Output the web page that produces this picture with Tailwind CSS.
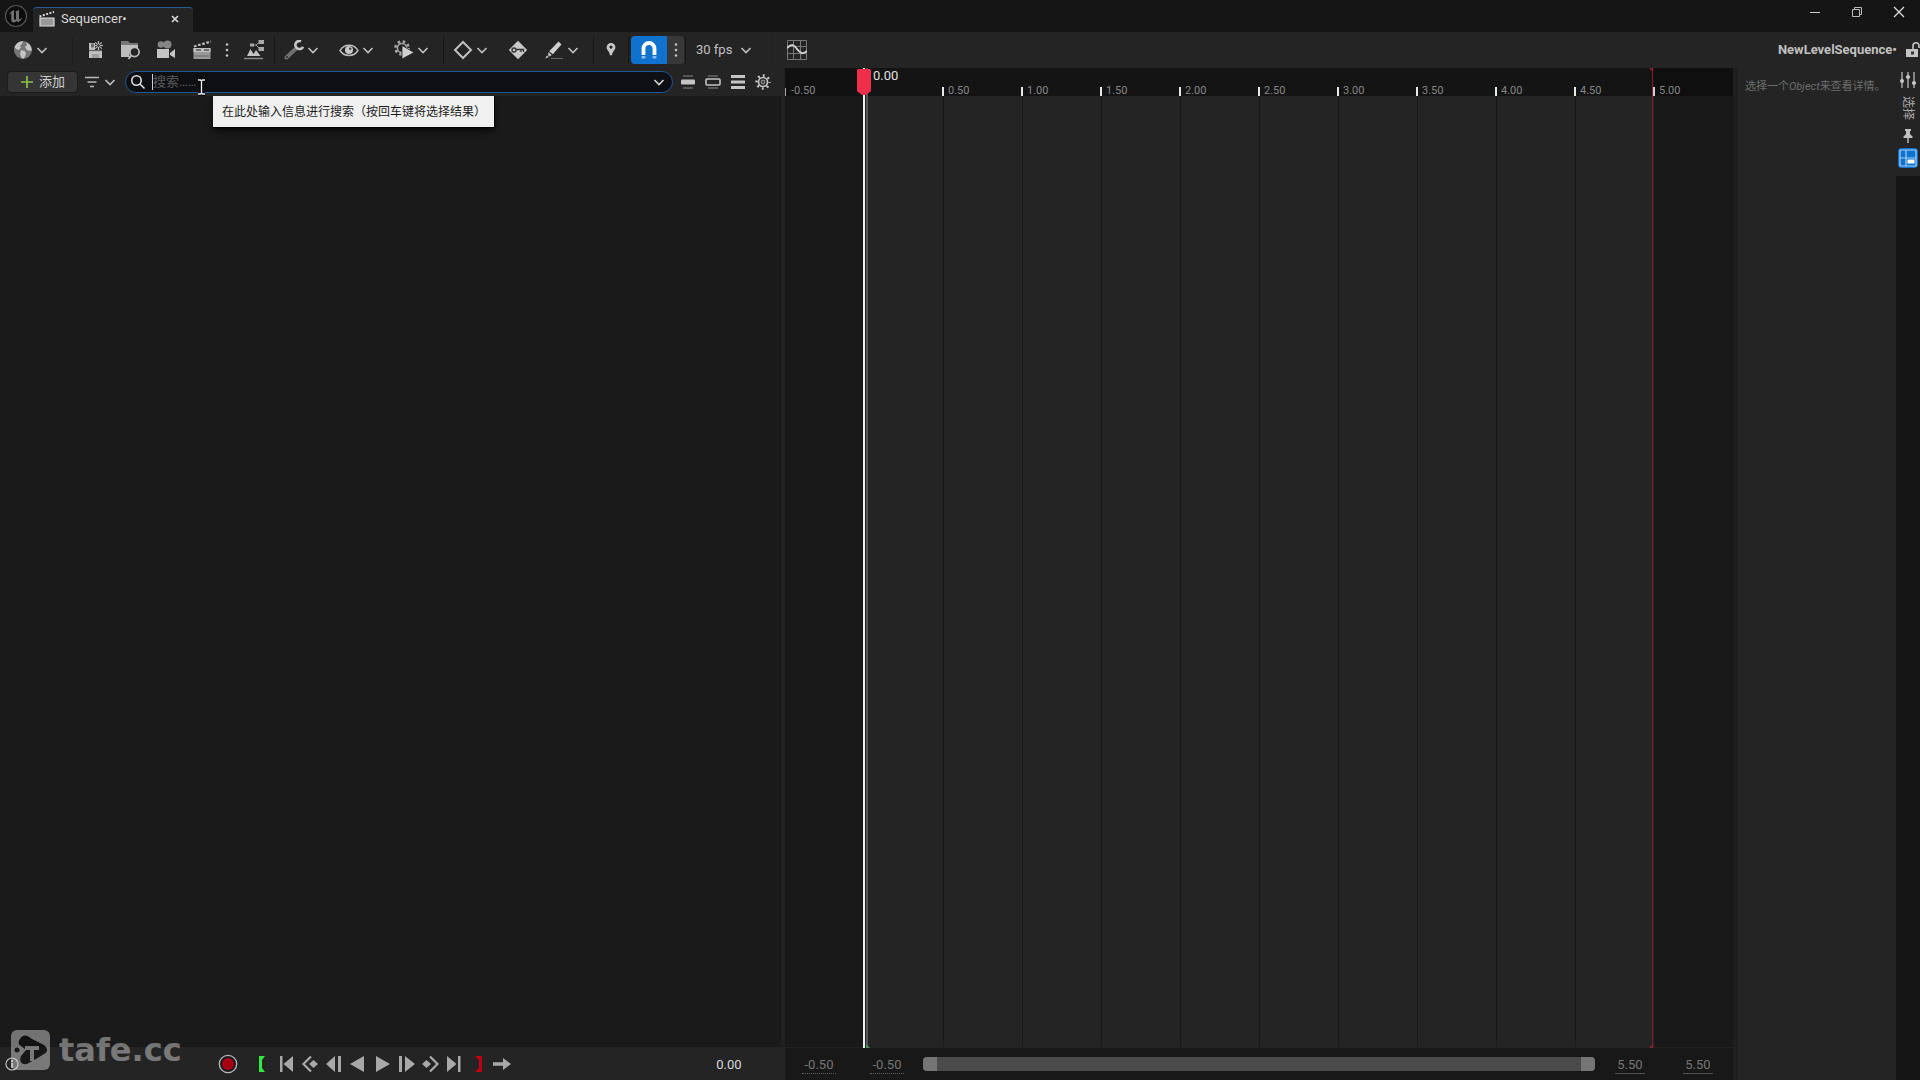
<!DOCTYPE html>
<html lang="zh-CN">
  <head>
    <meta charset="UTF-8" />
    <meta name="viewport" content="width=device-width, initial-scale=1.0" />
    <title>Sequencer</title>
    <script src="https://cdn.jsdelivr.net/npm/@tailwindcss/browser@4"></script>
  </head>

  <body
    class="relative flex h-screen flex-col overflow-hidden bg-[#151515] font-['Roboto','Noto_Sans_CJK_SC',sans-serif] text-[13px] leading-4 text-[#c0c0c0]"
  >
    <!-- shared icons -->
    <svg class="hidden">
      <symbol id="chevron" viewBox="0 0 12 12">
        <path d="M1.500 4l4.500 4.500L10.500 4" fill="none" stroke="currentColor" stroke-width="1.600" />
      </symbol>
      <symbol id="dots" viewBox="0 0 8 20">
        <circle cx="4" cy="4.500" r="1.300" /><circle cx="4" cy="10" r="1.300" /><circle cx="4" cy="15.500" r="1.300" />
      </symbol>
      <symbol id="clapper" viewBox="0 0 20 20">
        <path d="M1 6.500L18 1.500" stroke="currentColor" stroke-width="2.200" stroke-dasharray="2.600 1.700" fill="none" />
      </symbol>
    </svg>

    <!-- title bar -->
    <header class="flex h-8 shrink-0 items-end">
      <svg class="ml-1 h-8 w-6 shrink-0" viewBox="0 0 24 32">
        <circle cx="12" cy="16" r="10.500" fill="#0c0c0c" stroke="#555" stroke-width="1.200" />
        <path d="M5.500 14.500c1-2.500 2.500-3.700 4.500-4.500v8.600c0 1 1.200 1.600 2 .6v-6.500c0-.8-.3-1.200-.8-1.400 1.400-.3 2.800-.8 3.800-1.800v8.700c0 .9.700 1.100 1.200.9.900-.3 1.600-1 2-1.800-.6 2.300-2.200 4.200-4.200 5l-1.300-1.300c-1.200 1.300-2.400 1.600-3.300 1.400-1.400-.3-2.200-1.200-2.200-2.600v-6c-.7.300-1.200.4-1.700.7z" fill="#707070" />
      </svg>
      <div class="ml-[5px] flex h-[25px] w-40 items-center rounded-t-sm border-t border-[#2a5d92] bg-[#242424] pb-0.5 pl-1.5 text-[#d8d8d8]">
        <svg class="h-4 w-4" viewBox="0 0 16 16" stroke="#ddd" fill="none">
          <path d="M.5 5.500L15 .800" stroke-width="2" stroke-dasharray="2 1.500" />
          <path d="M1 7h14v8H1z" fill="#999" stroke-width="1.200" />
        </svg>
        <span class="ml-1.5">Sequencer•</span>
        <button class="mr-3 ml-auto" aria-label="Close tab">
          <svg class="h-3 w-3" viewBox="0 0 12 12"><path d="M3 3l6 6M9 3l-6 6" stroke="#d8d8d8" stroke-width="1.700" /></svg>
        </button>
      </div>
      <div class="ml-auto flex self-start">
        <button class="flex h-6 w-[42px] items-center justify-center" aria-label="Minimize">
          <svg class="h-3 w-3" viewBox="0 0 12 12"><path d="M1 6.500h10" stroke="#ccc" /></svg>
        </button>
        <button class="flex h-6 w-[42px] items-center justify-center" aria-label="Restore">
          <svg class="h-3 w-3" viewBox="0 0 12 12"><path d="M1.500 3.500h7v7h-7zM3.500 3.500v-2h7v7h-2" fill="none" stroke="#bbb" /></svg>
        </button>
        <button class="flex h-6 w-[42px] items-center justify-center" aria-label="Close">
          <svg class="h-3 w-3" viewBox="0 0 12 12"><path d="M1 1l10 10M11 1L1 11" stroke="#ddd" stroke-width="1.300" /></svg>
        </button>
      </div>
    </header>

    <!-- toolbar -->
    <div class="flex h-9 shrink-0 items-center overflow-hidden bg-[#242424]">
      <button class="ml-[13px] flex items-center gap-[3px]" aria-label="World">
        <svg class="h-5 w-5" viewBox="0 0 20 20">
          <circle cx="10" cy="10" r="9" fill="#757575" />
          <path d="M3 4.500C5 2 7.500 1 10 1.200L9 4 7 5.500l1 2L6 10 3 9 1.500 7zM13 2l4 3 2 5-2 1-3-1-2-3 2-2zM8 10l4 1 1 3-2 4.500H9L7 14z" fill="#c4c4c4" />
        </svg>
        <svg class="h-3 w-3"><use href="#chevron" /></svg>
      </button>
      <div class="ml-6 h-7 w-px bg-[#1d1d1d]"></div>
      <div class="ml-3 flex items-center gap-4">
        <button aria-label="Save">
          <svg class="h-5 w-5" viewBox="0 0 20 20">
            <path d="M4 3h6v7h7v8H4z" fill="#c0c0c0" />
            <path d="M6 3.500h3v4H6z" fill="#6a6a6a" /><path d="M4 10.500h13" stroke="#666" stroke-width="1.300" /><path d="M7 14h7v4H7z" fill="#a0a0a0" />
            <path d="M13.500 1v9M9 5.500h9M10.300 2.300l6.400 6.400M16.700 2.300l-6.400 6.400" stroke="#bdbdbd" stroke-width="1.200" />
            <circle cx="13.500" cy="5.500" r="1.300" fill="#242424" />
          </svg>
        </button>
        <button aria-label="Find in content browser">
          <svg class="h-5 w-5" viewBox="0 0 20 20">
            <path d="M0 1h7l2 2h8v2H0z" fill="#777" /><path d="M0 5h17v4a6 6 0 0 0-8 8H0z" fill="#bdbdbd" />
            <circle cx="13.500" cy="12" r="4.600" fill="#242424" stroke="#bdbdbd" stroke-width="1.700" />
            <path d="M10.300 15.500L7.500 19" stroke="#bdbdbd" stroke-width="2" />
          </svg>
        </button>
        <button aria-label="Create camera">
          <svg class="h-5 w-5" viewBox="0 0 20 20">
            <circle cx="4" cy="4.500" r="3.300" fill="#858585" /><circle cx="10.500" cy="4.500" r="4" fill="#858585" />
            <path d="M0 9h12v9H0zM13 13l5-4v9l-5-3z" fill="#c4c4c4" />
          </svg>
        </button>
        <button aria-label="Render movie">
          <svg class="h-5 w-5 text-[#bdbdbd]" viewBox="0 0 20 20">
            <use href="#clapper" />
            <path d="M.5 8h17v11H.5z" fill="#999" /><path d="M.5 8h17v4H.5z" fill="#c0c0c0" />
            <path d="M3 10h5M11 10h5" stroke="#555" stroke-width="1.500" /><path d="M1.500 16h15" stroke="#666" />
          </svg>
        </button>
      </div>
      <button class="ml-[10px]" aria-label="More render options"><svg class="h-5 w-2 fill-current"><use href="#dots" /></svg></button>
      <button class="ml-[13px]" aria-label="Director blueprint">
        <svg class="h-5 w-5" viewBox="0 0 20 20">
          <path d="M3 16l3.500-7 3 5 2.500-4 4.500 6z" fill="#c4c4c4" /><path d="M0 18.500h19" stroke="#888" stroke-width="1.500" />
          <path d="M8 5h4l4-3M12 5l4 4" fill="none" stroke="#999" />
          <path d="M6 3.500h4v3H6zM14.500 0H20v4h-5.500zM14.500 7H20v4h-5.500z" fill="#a8a8a8" />
        </svg>
      </button>
      <div class="ml-[10px] h-7 w-px bg-[#171717]"></div>
      <button class="ml-[9px] flex items-center gap-[3px]" aria-label="Actions">
        <svg class="h-5 w-5" viewBox="0 0 20 20">
          <path d="M2.500 17.500L12 8.500" stroke="#707070" stroke-width="4" stroke-linecap="round" />
          <path d="M17 1.300a4 4 0 1 0 2 5.500" fill="none" stroke="#cacaca" stroke-width="2.600" />
          <circle cx="3" cy="17" r=".9" fill="#242424" />
        </svg>
        <svg class="h-3 w-3"><use href="#chevron" /></svg>
      </button>
      <button class="ml-5 flex items-center gap-[3px]" aria-label="View options">
        <svg class="h-5 w-5" viewBox="0 0 20 20">
          <path d="M1 10.500C5 3.500 15 3.500 19 10.500 15 17 5 17 1 10.500z" fill="none" stroke="#bdbdbd" stroke-width="1.500" />
          <circle cx="10" cy="10" r="4" fill="#c8c8c8" /><circle cx="11.200" cy="8.800" r="1.200" fill="#444" />
        </svg>
        <svg class="h-3 w-3"><use href="#chevron" /></svg>
      </button>
      <button class="ml-5 flex items-center gap-[3px]" aria-label="Playback options">
        <svg class="h-5 w-5" viewBox="0 0 20 20">
          <circle cx="8" cy="8" r="6.500" fill="none" stroke="#a8a8a8" stroke-width="2.600" stroke-dasharray="2.500 2.600" />
          <circle cx="8" cy="8" r="4.600" fill="none" stroke="#a8a8a8" stroke-width="1.500" />
          <path d="M8 5.500L20 12.500 8 19z" fill="#d0d0d0" stroke="#242424" stroke-width=".800" />
        </svg>
        <svg class="h-3 w-3"><use href="#chevron" /></svg>
      </button>
      <div class="ml-[14px] h-7 w-px bg-[#171717]"></div>
      <button class="ml-[9px] flex items-center gap-[3px]" aria-label="Keyframe options">
        <svg class="h-5 w-5" viewBox="0 0 20 20"><path d="M10 2l8 8-8 8-8-8z" fill="none" stroke="#c0c0c0" stroke-width="2" /></svg>
        <svg class="h-3 w-3"><use href="#chevron" /></svg>
      </button>
      <button class="ml-5" aria-label="Auto key">
        <svg class="h-5 w-5" viewBox="0 0 20 20">
          <path d="M10 .8l9.200 9.200-9.200 9.200L.8 10z" fill="#c8c8c8" />
          <circle cx="6" cy="10" r="2" fill="none" stroke="#333" stroke-width="1.400" /><path d="M8 9.500h7.500V12M13 9.500V12" fill="none" stroke="#333" stroke-width="1.300" />
        </svg>
      </button>
      <button class="ml-4 flex items-center gap-[3px]" aria-label="Edit options">
        <svg class="h-5 w-5" viewBox="0 0 20 20">
          <path d="M14.500 1.500l3 3-8.700 9.700-3.600-3z" fill="#d0d0d0" /><path d="M4.500 12l3.200 3-2 1.500-1.700-1.300zM3 15.500l2 1.600L1 18.500z" fill="#c0c0c0" />
          <path d="M7 18.500h12" stroke="#666" />
        </svg>
        <svg class="h-3 w-3"><use href="#chevron" /></svg>
      </button>
      <div class="ml-[14px] h-7 w-px bg-[#171717]"></div>
      <button class="ml-[7px]" aria-label="Marker">
        <svg class="h-5 w-5" viewBox="0 0 20 20"><path d="M10 3a4.200 4.200 0 0 1 4.400 4.200c0 2.800-2.800 3.800-3.400 8H9c-.6-4.200-3.400-5.200-3.400-8A4.200 4.200 0 0 1 10 3zm0 2.500a1.600 1.600 0 1 0 0 3.200 1.600 1.600 0 0 0 0-3.200z" fill="#c8c8c8" /></svg>
      </button>
      <div class="ml-[7px] h-7 w-px bg-[#171717]"></div>
      <button class="ml-0.5 flex h-7 w-9 items-center justify-center rounded-l bg-[#0f72cf]" aria-label="Snapping" aria-pressed="true">
        <svg class="h-5 w-5" viewBox="0 0 20 20">
          <path d="M4.500 15V8.500a5.500 5.500 0 0 1 11 0V15" fill="none" stroke="#fff" stroke-width="3.800" />
          <path d="M2.600 16h3.800v2.500H2.600zM13.600 16h3.800v2.500h-3.800z" fill="#8bbdeb" />
        </svg>
      </button>
      <button class="flex h-7 w-[17px] items-center justify-center rounded-r bg-[#383838]" aria-label="Snapping options"><svg class="h-5 w-2 fill-current"><use href="#dots" /></svg></button>
      <div class="ml-px h-7 w-px bg-[#171717]"></div>
      <button class="ml-[10px] flex items-center gap-2">
        <span class="w-9 text-left whitespace-nowrap">30 fps</span>
        <svg class="h-3 w-3"><use href="#chevron" /></svg>
      </button>
      <div class="ml-5 h-7 w-px bg-[#1f1f1f]"></div>
      <button class="ml-[14px]" aria-label="Curve editor">
        <svg class="h-5 w-5" viewBox="0 0 20 20" fill="none">
          <path d="M.5.5h19v19H.5zM.5 6.500h19M.5 13.500h19M6.500.5v19M13.500.5v19" stroke="#777" />
          <path d="M0 8c5-5 7-3 10 1s6 6 10 2" stroke="#cfcfcf" stroke-width="2" />
        </svg>
      </button>
      <button class="ml-auto font-bold">NewLevelSequence•</button>
      <button class="ml-[9px]" aria-label="Unlock">
        <svg class="h-5 w-[14px]" viewBox="0 0 14 20">
          <path d="M0 9h12v8H0z" fill="#c4c4c4" /><path d="M7 9V6a3 3 0 0 1 6-.5V8" fill="none" stroke="#c4c4c4" stroke-width="1.600" /><path d="M5 11.500h3v3H5z" fill="#333" />
        </svg>
      </button>
    </div>

    <main class="flex min-h-0 flex-1">
      <!-- track outliner -->
      <section class="flex min-w-0 flex-[785] flex-col bg-[#1a1a1a]">
        <div class="flex h-7 shrink-0 items-center bg-[#242424] pl-[7px]">
          <button class="flex h-[22px] w-[71px] items-center gap-1 rounded-sm border border-[#1a1a1a] bg-[#353535] pl-[11px] text-[#d0d0d0]">
            <svg class="h-4 w-4 shrink-0" viewBox="0 0 16 16"><path d="M8 2v12M2 8h12" stroke="#8bc24a" stroke-width="1.700" /></svg>
            <span class="whitespace-nowrap">添加</span>
          </button>
          <button class="ml-1.5 flex items-center gap-1" aria-label="Filter">
            <svg class="h-4 w-4" viewBox="0 0 16 16"><path d="M1 3.500h14M3.500 8h9M6 12.500h4" stroke="#b8b8b8" stroke-width="1.600" /></svg>
            <svg class="h-3 w-3"><use href="#chevron" /></svg>
          </button>
          <div class="ml-[9px] flex h-[22px] min-w-0 flex-1 items-center rounded-full border border-[#1e5796] bg-[#0d0f12] pr-[7px] pl-1">
            <svg class="h-4 w-4 shrink-0" viewBox="0 0 16 16" fill="none" stroke="#e0e0e0" stroke-width="1.600">
              <circle cx="6.500" cy="6.500" r="4.700" /><path d="M10 10l4.500 4.500" />
            </svg>
            <span class="ml-1.5 h-4 w-px shrink-0 bg-[#d0d0d0]"></span>
            <input type="text" aria-label="搜索" placeholder="搜索……" class="h-4 min-w-0 flex-1 outline-none font-['Roboto','Noto_Sans_CJK_SC',sans-serif] placeholder:text-[#5a5a5a]" />
            <button aria-label="Search history"><svg class="h-3 w-3 text-[#d8d8d8]"><use href="#chevron" /></svg></button>
          </div>
          <div class="ml-[7px] flex shrink-0 gap-[9px] pr-[14px]">
            <button aria-label="Collapse">
              <svg class="h-4 w-4" viewBox="0 0 16 16"><path d="M3 2h10M3 14h10" stroke="#888" stroke-width="1.200" /><rect x="1" y="5.500" width="14" height="5" rx="1" fill="#c4c4c4" /></svg>
            </button>
            <button aria-label="Outline">
              <svg class="h-4 w-4" viewBox="0 0 16 16"><path d="M3 2h10M3 14h10" stroke="#888" stroke-width="1.200" /><rect x="1" y="5" width="14" height="6" rx="1" fill="none" stroke="#c4c4c4" stroke-width="1.600" /></svg>
            </button>
            <button aria-label="Expand">
              <svg class="h-4 w-4" viewBox="0 0 16 16"><path d="M1 2.500h14M1 8h14M1 13.500h14" stroke="#c4c4c4" stroke-width="3" /></svg>
            </button>
            <button aria-label="Settings">
              <svg class="h-4 w-4" viewBox="0 0 16 16" fill="none" stroke="#c4c4c4">
                <circle cx="8" cy="8" r="4.500" stroke-width="1.700" /><circle cx="8" cy="8" r="1.700" stroke-width="1.400" stroke="#888" />
                <circle cx="8" cy="8" r="6.500" stroke-width="2.400" stroke-dasharray="1.900 3.205" stroke-dashoffset=".95" />
              </svg>
            </button>
          </div>
        </div>
        <div class="flex-1 border-r-4 border-[#212121]"></div>

        <!-- transport controls -->
        <div class="flex h-[33px] shrink-0 items-center bg-[#242424] text-[#a8a8a8]">
          <svg class="ml-1 h-4 w-4" viewBox="0 0 16 16"><circle cx="8" cy="8" r="6" fill="none" stroke="#bbb" stroke-width="1.200" /><path d="M8 4v2M8 7v5" stroke="#ccc" stroke-width="1.600" /></svg>
          <button class="ml-[196px]" aria-label="Record">
            <svg class="h-6 w-6" viewBox="0 0 24 24"><circle cx="12" cy="12" r="8.700" fill="#1c1c1c" stroke="#b8b8b8" stroke-width="1.300" /><circle cx="12" cy="12" r="6" fill="#a80012" /></svg>
          </button>
          <div class="ml-[10px] flex">
            <button aria-label="Set start">
              <svg class="h-6 w-6" viewBox="0 0 24 24"><path d="M9 4h6l-3 4v8l3 4H9z" fill="#35e645" /></svg>
            </button>
            <button aria-label="To front">
              <svg class="h-6 w-6" viewBox="0 0 24 24"><path d="M6 4h2.500v16H6zM19 4v16L9.500 12z" fill="currentColor" /></svg>
            </button>
            <button aria-label="Previous key">
              <svg class="h-6 w-6" viewBox="0 0 24 24"><path d="M13 4.500L5.500 12l7.500 7.500" fill="none" stroke="currentColor" stroke-width="2.200" /><path d="M15.500 8l4.500 4-4.500 4-4.500-4z" fill="currentColor" /></svg>
            </button>
            <button aria-label="Step back">
              <svg class="h-6 w-6" viewBox="0 0 24 24"><path d="M13 4v16L4 12zM16 4h3v16h-3z" fill="currentColor" /></svg>
            </button>
            <button aria-label="Play reverse">
              <svg class="h-6 w-6" viewBox="0 0 24 24"><path d="M18 4v16L4 12z" fill="currentColor" /></svg>
            </button>
            <button aria-label="Play">
              <svg class="h-6 w-6" viewBox="0 0 24 24"><path d="M6 4v16l14-8z" fill="currentColor" /></svg>
            </button>
            <button aria-label="Step forward">
              <svg class="h-6 w-6" viewBox="0 0 24 24"><path d="M11 4v16l10-8zM5 4h3v16H5z" fill="currentColor" /></svg>
            </button>
            <button aria-label="Next key">
              <svg class="h-6 w-6" viewBox="0 0 24 24"><path d="M12 4.500l7.500 7.500-7.500 7.500" fill="none" stroke="currentColor" stroke-width="2.200" /><path d="M8.500 8l4.500 4-4.500 4L4 12z" fill="currentColor" /></svg>
            </button>
            <button aria-label="To end">
              <svg class="h-6 w-6" viewBox="0 0 24 24"><path d="M16 4h2.500v16H16zM5 4v16l9.500-8z" fill="currentColor" /></svg>
            </button>
            <button aria-label="Set end">
              <svg class="h-6 w-6" viewBox="0 0 24 24"><path d="M16 4H9l4 4v8l-4 4h7z" fill="#c00012" /></svg>
            </button>
            <button aria-label="Loop mode">
              <svg class="h-6 w-6" viewBox="0 0 24 24"><path d="M3 10.200h10V6l8 6-8 6v-4.200H3z" fill="currentColor" /></svg>
            </button>
          </div>
          <input type="text" aria-label="Current time" value="0.00" class="mr-7 ml-auto w-16 pt-0.5 pl-2 text-center text-[#d8d8d8]" />
        </div>
      </section>

      <!-- timeline -->
      <section class="flex min-w-0 flex-[948] flex-col bg-[#181818]">
        <div class="relative flex min-h-0 flex-1 flex-col">
          <div class="grid h-7 shrink-0 grid-cols-12 text-[11px] leading-[10px] text-[#858585]">
            <div class="flex items-end bg-[#111111]"><i class="h-2 w-px bg-[#aaa]"></i><span class="ml-[5px]">-0.50</span></div>
            <div class="bg-[#141414]"></div>
            <div class="flex items-end bg-[#141414]"><i class="-ml-px h-[9px] w-0.5 bg-[#e8e8e8]"></i><span class="ml-1">0.50</span></div>
            <div class="flex items-end bg-[#141414]"><i class="-ml-px h-[9px] w-0.5 bg-[#e8e8e8]"></i><span class="ml-1">1.00</span></div>
            <div class="flex items-end bg-[#141414]"><i class="-ml-px h-[9px] w-0.5 bg-[#e8e8e8]"></i><span class="ml-1">1.50</span></div>
            <div class="flex items-end bg-[#141414]"><i class="-ml-px h-[9px] w-0.5 bg-[#e8e8e8]"></i><span class="ml-1">2.00</span></div>
            <div class="flex items-end bg-[#141414]"><i class="-ml-px h-[9px] w-0.5 bg-[#e8e8e8]"></i><span class="ml-1">2.50</span></div>
            <div class="flex items-end bg-[#141414]"><i class="-ml-px h-[9px] w-0.5 bg-[#e8e8e8]"></i><span class="ml-1">3.00</span></div>
            <div class="flex items-end bg-[#141414]"><i class="-ml-px h-[9px] w-0.5 bg-[#e8e8e8]"></i><span class="ml-1">3.50</span></div>
            <div class="flex items-end bg-[#141414]"><i class="-ml-px h-[9px] w-0.5 bg-[#e8e8e8]"></i><span class="ml-1">4.00</span></div>
            <div class="flex items-end bg-[#141414]"><i class="-ml-px h-[9px] w-0.5 bg-[#e8e8e8]"></i><span class="ml-1">4.50</span></div>
            <div class="flex items-end bg-[#0f0f0f]"><i class="-ml-px h-[9px] w-0.5 bg-[#d0d0d0]"></i><span class="ml-1">5.00</span></div>
          </div>
          <div class="grid flex-1 grid-cols-12 border-b border-[#222]">
            <div class="bg-[#191919]"></div>
            <div class="bg-[#242424]"></div>
            <div class="border-l border-[#181818] bg-[#242424]"></div>
            <div class="border-l border-[#181818] bg-[#242424]"></div>
            <div class="border-l border-[#181818] bg-[#242424]"></div>
            <div class="border-l border-[#181818] bg-[#242424]"></div>
            <div class="border-l border-[#181818] bg-[#242424]"></div>
            <div class="border-l border-[#181818] bg-[#242424]"></div>
            <div class="border-l border-[#181818] bg-[#242424]"></div>
            <div class="border-l border-[#181818] bg-[#242424]"></div>
            <div class="border-l border-[#181818] bg-[#242424]"></div>
            <div class="bg-[#191919]"></div>
          </div>
          <!-- playhead -->
          <div class="absolute inset-y-0 left-1/12 w-0">
            <div class="absolute inset-y-0 -left-px w-0.5 bg-[#f0f0f0]"></div>
            <div class="absolute inset-y-0 left-0.5 w-0.5 bg-[#555]"></div>
            <svg class="absolute top-0 -left-[7px] h-7 w-[14px]" viewBox="0 0 14 28"><path d="M0 2.500Q0 1 1.500 1h11Q14 1 14 2.500V23l-5 4H5l-5-4z" fill="#f0304a" /></svg>
            <span class="absolute top-0 left-[9px] text-[#e0e0e0]">0.00</span>
            <svg class="absolute bottom-0 left-0.5 h-1 w-1" viewBox="0 0 4 4"><path d="M0 0l4 4H0z" fill="#3f9a50" /></svg>
          </div>
          <!-- end of range -->
          <div class="absolute inset-y-0 left-11/12 w-0">
            <div class="absolute inset-y-0 -left-0.5 w-px bg-[#7c2030]"></div>
            <svg class="absolute top-0 -left-[5px] h-1 w-1" viewBox="0 0 4 4"><path d="M0 0h4v4z" fill="#8c2030" /></svg>
            <svg class="absolute bottom-0 -left-[5px] h-1 w-1" viewBox="0 0 4 4"><path d="M4 0v4H0z" fill="#8c2030" /></svg>
          </div>
        </div>
        <!-- view range -->
        <div class="flex h-8 shrink-0 items-center pr-5 pl-[17px] text-[#757575]">
          <input type="text" aria-label="Working start" value="-0.50" class="mt-0.5 w-[34px] border-b border-dotted border-[#606060] text-center" />
          <input type="text" aria-label="View start" value="-0.50" class="mt-0.5 ml-[34px] w-[34px] border-b border-dotted border-[#606060] text-center" />
          <div class="ml-[19px] flex h-[14px] flex-1 justify-between rounded-sm bg-[#4b4b4b]">
            <span class="w-[14px] rounded-l-sm bg-[#757575]"></span>
            <span class="w-[14px] rounded-r-sm bg-[#757575]"></span>
          </div>
          <input type="text" aria-label="View end" value="5.50" class="mt-0.5 ml-5 w-[30px] border-b border-[#505050] text-center" />
          <input type="text" aria-label="Working end" value="5.50" class="mt-0.5 ml-[38px] w-[30px] border-b border-[#505050] text-center" />
        </div>
      </section>

      <!-- details -->
      <aside class="w-[163px] shrink-0 border-l-[5px] border-[#1f1f1f] bg-[#242424] pt-[11px] pl-[7px] text-[11px] whitespace-nowrap text-[#6c6c6c]">
        选择一个<em>Object</em>来查看详情。
      </aside>
      <nav class="w-6 shrink-0">
        <div class="flex h-[108px] flex-col items-center bg-[#242424] pt-1">
          <svg class="h-4 w-4" viewBox="0 0 16 16" stroke="#b8b8b8" fill="#c8c8c8"><path d="M2 0v16M8 0v16M14 0v16" stroke-width="1.300" /><circle cx="2" cy="9" r="1.700" /><circle cx="8" cy="5" r="1.700" /><circle cx="14" cy="11" r="1.700" /></svg>
          <button class="mt-2 text-xs leading-4 text-[#a8a8a8] [text-orientation:sideways] [writing-mode:vertical-rl]">选择</button>
          <button class="mt-2" aria-label="Pin">
            <svg class="h-4 w-4" viewBox="0 0 16 16"><path d="M5 1h6v2h-1v3l2.500 2.500V10h-9V8.500L6 6V3H5zM7.300 10h1.400v5H7.300z" fill="#c0c0c0" /></svg>
          </button>
          <button class="mt-1 rounded-sm bg-[#0f72cf]" aria-label="Details panel">
            <svg class="h-5 w-5" viewBox="0 0 20 20"><path d="M2 2h16v16H2zM2 10h16M8 2v16" fill="none" stroke="#a8d0f5" stroke-width="1.200" /><path d="M9.500 11.500h7v4h-7z" fill="#fff" /></svg>
          </button>
        </div>
      </nav>
    </main>

    <!-- search tooltip -->
    <div role="tooltip" class="absolute top-24 left-[213px] flex h-8 items-center border-r border-b border-black bg-[#f0f0f0] pr-2 pl-[9px] text-xs text-[#1c1c1c] shadow-md shadow-black/60">
      在此处输入信息进行搜索（按回车键将选择结果）
    </div>
    <!-- mouse cursor -->
    <svg class="pointer-events-none absolute top-[78px] left-[196px] h-[18px] w-[11px]" viewBox="0 0 11 18" fill="none">
      <path d="M2 2h2.500l1 1 1-1H9M5.500 3v12M2 16h2.500l1-1 1 1H9" stroke="#000" stroke-width="3.500" />
      <path d="M2 2h2.500l1 1 1-1H9M5.500 3v12M2 16h2.500l1-1 1 1H9" stroke="#eee" stroke-width="1.400" />
    </svg>
    <!-- watermark -->
    <div class="pointer-events-none absolute bottom-[10px] left-[11px] flex items-center gap-2 opacity-45">
      <svg class="h-10 w-10" viewBox="0 0 40 40">
        <rect width="39" height="40" rx="6" fill="#e0e0e0" />
        <path d="M9 9c4-6 8-3 12 0l12 6c4 3 4 7 0 9l-8 5-9 5c-6 1-8-3-6-8l5-6-5-4c-3-2-3-4-1-7z" fill="#0a0a0a" />
        <circle cx="6" cy="20" r="2.500" fill="#0a0a0a" />
        <path d="M14 16h14v4h-5v11h-4V20h-5z" fill="#e0e0e0" />
      </svg>
      <span class="font-['DejaVu_Sans'] text-[32px] leading-10 font-bold text-[#e0e0e0]">tafe.cc</span>
    </div>
  </body>
</html>
